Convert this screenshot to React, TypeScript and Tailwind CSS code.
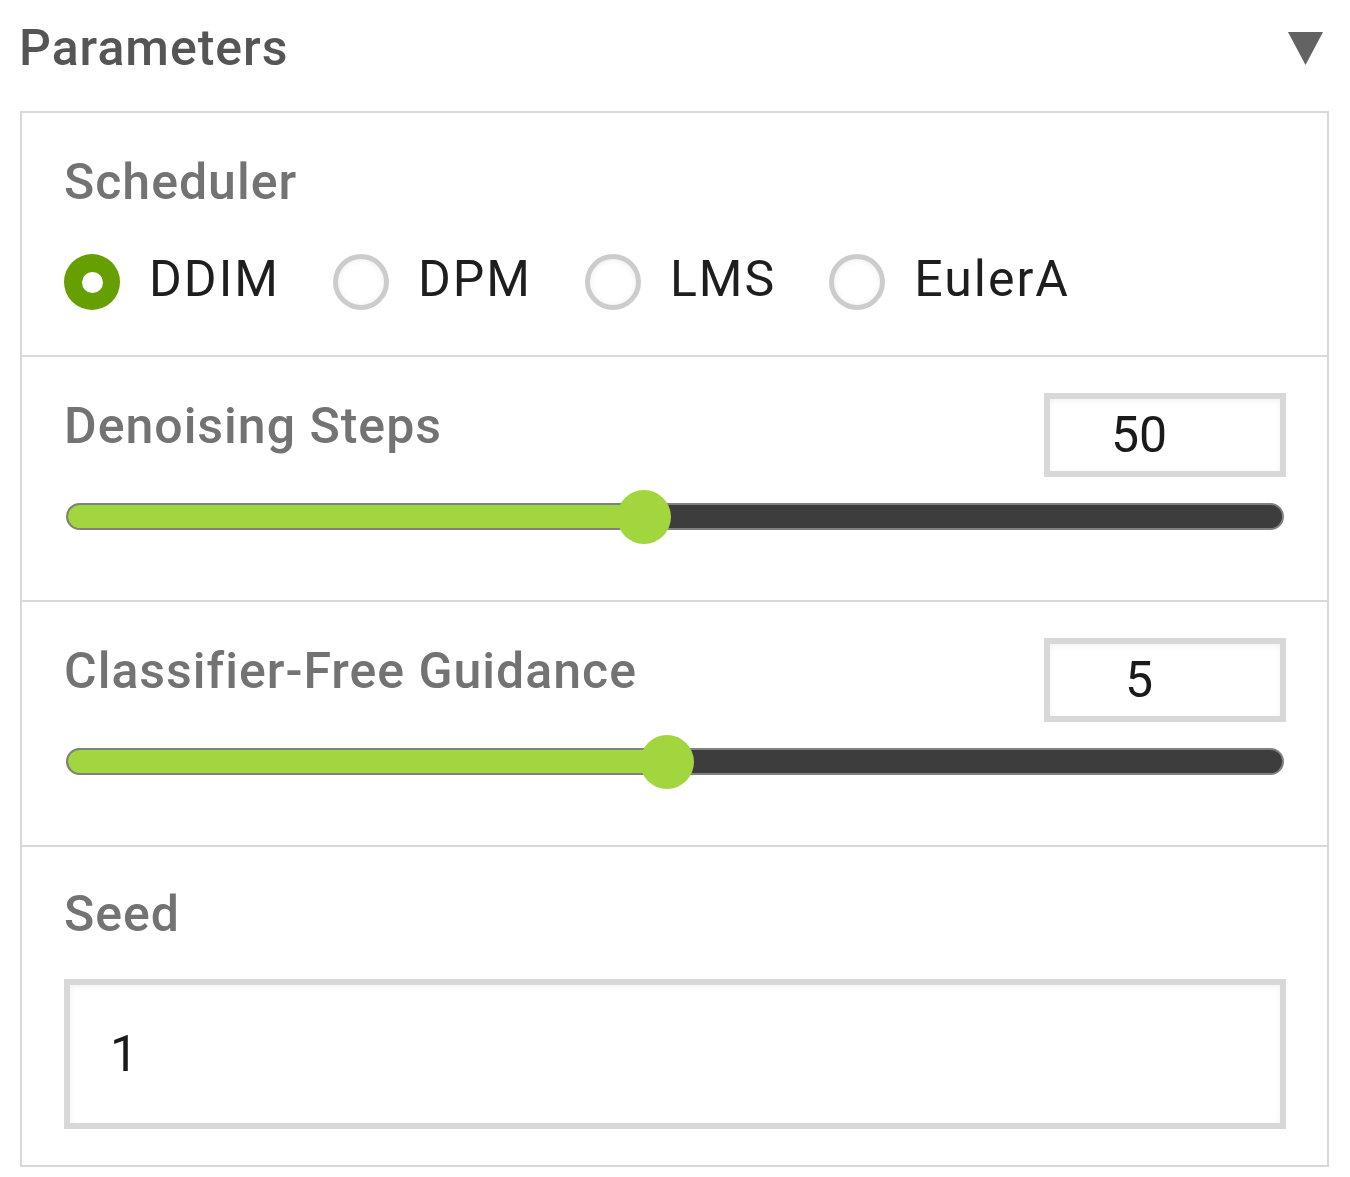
import React from "react";

const options = ["DDIM", "DPM", "LMS", "EulerA"];

function Radio({ selected }: { selected: boolean }) {
  if (selected) {
    return (
      <span className="flex h-[56px] w-[56px] shrink-0 items-center justify-center rounded-full bg-[#66a000]">
        <span className="h-[21px] w-[21px] rounded-full bg-white" />
      </span>
    );
  }
  return (
    <span className="h-[56px] w-[56px] shrink-0 rounded-full border-[5px] border-[#cccccc] bg-white shadow-[inset_0_1px_6px_rgba(0,0,0,0.07)]" />
  );
}

function Slider({ thumbCenter }: { thumbCenter: number }) {
  return (
    <div className="relative mt-[12px] h-[56px]">
      <div className="absolute left-[2px] right-[2px] top-[14px] h-[27px] overflow-hidden rounded-full border-2 border-[#808080] bg-[#3d3d3d]">
        <div className="h-full bg-[#a2d63e]" style={{ width: thumbCenter - 2 }} />
      </div>
      <div
        className="absolute top-[1px] h-[54px] w-[54px] rounded-full bg-[#a2d63e]"
        style={{ left: thumbCenter - 27 }}
      />
    </div>
  );
}

function SliderSection({ label, value, thumbCenter }: { label: string; value: string; thumbCenter: number }) {
  return (
    <div className="pb-[55px] pl-[42px] pr-[41px] pt-[36px]">
      <div className="flex items-start justify-between">
        <span className="mt-[3px] text-[50px] font-medium leading-[60px] tracking-[1px] text-[#737373]">{label}</span>
        <div className="flex h-[84px] w-[242px] items-center justify-center border-[6px] border-[#d8d8d8] bg-white pr-[52px] text-[50px] leading-[60px] text-[#1a1a1a] shadow-[inset_0_2px_6px_rgba(0,0,0,0.05)]">
          {value}
        </div>
      </div>
      <Slider thumbCenter={thumbCenter} />
    </div>
  );
}

export default function App() {
  return (
    <div className="min-h-screen w-[1350px] bg-white font-['Roboto',sans-serif]">
      <div className="flex h-[78px] items-center justify-between pl-[19px] pr-[27px] pt-[18px]">
        <span className="text-[50px] font-medium leading-[60px] tracking-[1px] text-[#555555]">Parameters</span>
        <svg width="35" height="33" viewBox="0 0 35 33">
          <polygon points="0,0 35,0 17.5,33" fill="#636363" />
        </svg>
      </div>
      <div className="ml-[20px] mt-[33px] w-[1309px] divide-y-2 divide-[#d9d9d9] border-2 border-[#d9d9d9]">
        <div className="pb-[45px] pl-[42px] pr-[41px] pt-[39px]">
          <div className="text-[50px] font-medium leading-[60px] tracking-[1px] text-[#737373]">Scheduler</div>
          <div className="mt-[42px] flex h-[56px] items-center gap-[53px]">
            {options.map((o, i) => (
              <div key={o} className="flex items-center gap-[29px]">
                <Radio selected={i === 0} />
                <span className="mb-[6px] text-[50px] leading-[56px] tracking-[2px] text-[#1e1e1e]">{o}</span>
              </div>
            ))}
          </div>
        </div>
        <SliderSection label="Denoising Steps" value="50" thumbCenter={580} />
        <SliderSection label="Classifier-Free Guidance" value="5" thumbCenter={603} />
        <div className="pb-[36px] pl-[42px] pr-[41px] pt-[37px]">
          <div className="text-[50px] font-medium leading-[60px] tracking-[1px] text-[#737373]">Seed</div>
          <div className="mt-[35px] flex h-[150px] items-center border-[6px] border-[#d8d8d8] bg-white pl-[40px] text-[50px] leading-[60px] text-[#1a1a1a] shadow-[inset_0_2px_6px_rgba(0,0,0,0.05)]">
            1
          </div>
        </div>
      </div>
    </div>
  );
}
